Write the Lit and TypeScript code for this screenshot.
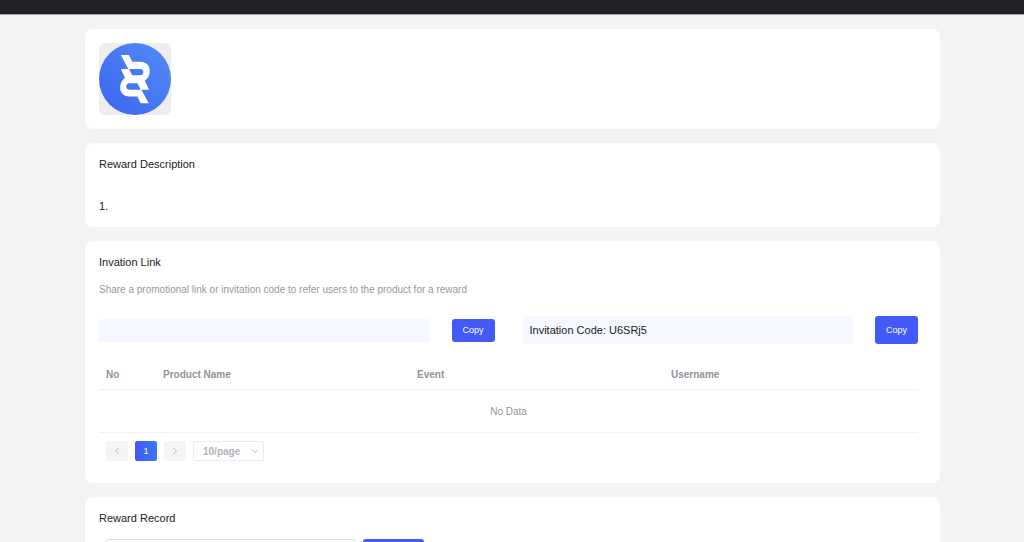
import { LitElement, html, css } from "lit";
import { customElement, property } from "lit/decorators.js";

@customElement("reward-card")
class RewardCard extends LitElement {
  @property() heading = "";

  static styles = css`
    :host {
      display: block;
      padding: 14px 22px 14px 14px;
      border-radius: 8px;
      background: #fff;
      box-sizing: border-box;
    }
    .heading {
      margin: 0;
      font-size: 11px;
      font-weight: 400;
      line-height: 14px;
      color: #222;
    }
  `;

  render() {
    return html`
      ${this.heading ? html`<h2 class="heading">${this.heading}</h2>` : null}
      <slot></slot>
    `;
  }
}

@customElement("app-root")
class AppRoot extends LitElement {
  static styles = css`
    :host {
      display: block;
      height: 100vh;
      overflow: hidden;
      background: #f4f2f4;
      font-family: "Liberation Sans", Arial, Helvetica, sans-serif;
      font-size: 11px;
      color: #222;
    }
    .topbar {
      height: 14px;
      background: #212228;
      border-bottom: 1px solid #a5a4a8;
    }
    .page {
      display: flex;
      flex-direction: column;
      gap: 14px;
      padding: 14px 84px 14px 85px;
    }
    .logo {
      display: block;
      width: 72px;
      height: 72px;
      border-radius: 6px;
      background: #eee;
    }
    .rules {
      margin: 28px 0 0;
      line-height: 14px;
    }
    .hint {
      margin: 14px 0 0;
      font-size: 10px;
      line-height: 13px;
      color: #999;
    }
    .share {
      display: grid;
      grid-template-columns: 1fr 1fr;
      align-items: center;
      gap: 28px;
      margin-top: 20px;
    }
    .copy-row {
      display: flex;
      gap: 22px;
      height: 23px;
    }
    .copy-row.tall {
      height: 28px;
    }
    .field {
      flex: 1;
      min-width: 0;
      box-sizing: border-box;
      border: 0;
      border-radius: 3px;
      padding: 0 7px;
      background: #f4f8fe;
      font: inherit;
      color: #222;
    }
    .button {
      border: 0;
      border-radius: 3px;
      padding: 0;
      width: 43px;
      background: #425bf8;
      color: #fff;
      font: inherit;
      font-size: 9px;
    }
    .table {
      width: 100%;
      margin-top: 15px;
      border-collapse: collapse;
      table-layout: fixed;
      font-size: 10px;
      color: #909399;
    }
    .table th {
      height: 30px;
      padding: 0 7px;
      text-align: left;
      border-bottom: 1px solid #f0f0f2;
    }
    .table .narrow {
      width: 43px;
    }
    .table .empty {
      height: 42px;
      padding: 0;
      text-align: center;
      border-bottom: 1px solid #f0f0f2;
    }
    .pager {
      display: flex;
      gap: 7px;
      margin: 8px 0 8px 7px;
    }
    .page-button {
      display: grid;
      place-items: center;
      width: 22px;
      height: 20px;
      padding: 0;
      border: 0;
      border-radius: 2px;
      background: #f4f4f5;
      color: #b9bbc0;
      font: inherit;
      font-size: 9px;
    }
    .page-button.current {
      background: linear-gradient(90deg, #4159f6, #3b76f6);
      color: #fff;
    }
    .chevron {
      width: 8px;
      height: 8px;
      fill: none;
      stroke: #bbbdc2;
    }
    .size {
      display: grid;
      grid-template-columns: 1fr;
      align-items: center;
      width: 71px;
      height: 20px;
    }
    .size-select {
      grid-area: 1 / 1;
      width: 100%;
      height: 20px;
      padding: 0 9px;
      appearance: none;
      border: 1px solid #ebecf0;
      border-radius: 2px;
      background: #fff;
      color: #b0b2b7;
      font: inherit;
      font-size: 10px;
      font-weight: 700;
    }
    .size .chevron {
      grid-area: 1 / 1;
      justify-self: end;
      margin-right: 5px;
      pointer-events: none;
    }
    .search {
      display: flex;
      gap: 7px;
      margin: 14px 0 0 7px;
    }
    .search-box {
      width: 250px;
      height: 23px;
      box-sizing: border-box;
      border: 1px solid #dcdfe6;
      border-radius: 3px;
      font: inherit;
    }
    .search-button {
      width: 61px;
    }
  `;

  render() {
    return html`
      <header class="topbar"></header>
      <main class="page">
        <reward-card>
          <svg class="logo" viewBox="29 21 214 214" role="img" aria-label="Logo">
            <defs>
              <linearGradient id="disc" x1="0.1" y1="0.9" x2="0.9" y2="0.1">
                <stop offset="0" stop-color="#3c68ef" />
                <stop offset="1" stop-color="#5288f8" />
              </linearGradient>
            </defs>
            <circle cx="136" cy="128" r="107" fill="url(#disc)" />
            <path
              fill="#fff"
              fill-rule="evenodd"
              d="M94 57H118L128 77H152C169 77 180 88 180 104C180 117 175 126 165 133L178 160H155L177 200H153L143 180H119C102 180 92 169 92 154C92 141 97 131 106 124L94 98H116ZM118 98L128 117H152C164 117 164 98 152 98ZM153 160L143 141H119C107 141 107 160 119 160Z"
            />
          </svg>
        </reward-card>

        <reward-card heading="Reward Description">
          <p class="rules">1.</p>
        </reward-card>

        <reward-card heading="Invation Link">
          <p class="hint">
            Share a promotional link or invitation code to refer users to the product for a reward
          </p>
          <div class="share">
            <div class="copy-row">
              <input class="field" aria-label="Invitation link" readonly />
              <button class="button">Copy</button>
            </div>
            <div class="copy-row tall">
              <input class="field" aria-label="Invitation code" readonly value="Invitation Code: U6SRj5" />
              <button class="button">Copy</button>
            </div>
          </div>
          <table class="table">
            <thead>
              <tr>
                <th class="narrow">No</th>
                <th>Product Name</th>
                <th>Event</th>
                <th>Username</th>
              </tr>
            </thead>
            <tbody>
              <tr>
                <td class="empty" colspan="4">No Data</td>
              </tr>
            </tbody>
          </table>
          <nav class="pager" aria-label="Pages">
            <button class="page-button" aria-label="Previous page" disabled>
              <svg class="chevron" viewBox="0 0 8 8"><path d="M5.5 1L2.5 4L5.5 7" /></svg>
            </button>
            <button class="page-button current">1</button>
            <button class="page-button" aria-label="Next page" disabled>
              <svg class="chevron" viewBox="0 0 8 8"><path d="M2.5 1L5.5 4L2.5 7" /></svg>
            </button>
            <div class="size">
              <select class="size-select" aria-label="Rows per page">
                <option>10/page</option>
              </select>
              <svg class="chevron" viewBox="0 0 8 8"><path d="M1 2.5L4 5.5L7 2.5" /></svg>
            </div>
          </nav>
        </reward-card>

        <reward-card heading="Reward Record">
          <div class="search">
            <input class="search-box" aria-label="Search records" />
            <button class="button search-button" aria-label="Search"></button>
          </div>
        </reward-card>
      </main>
    `;
  }
}
